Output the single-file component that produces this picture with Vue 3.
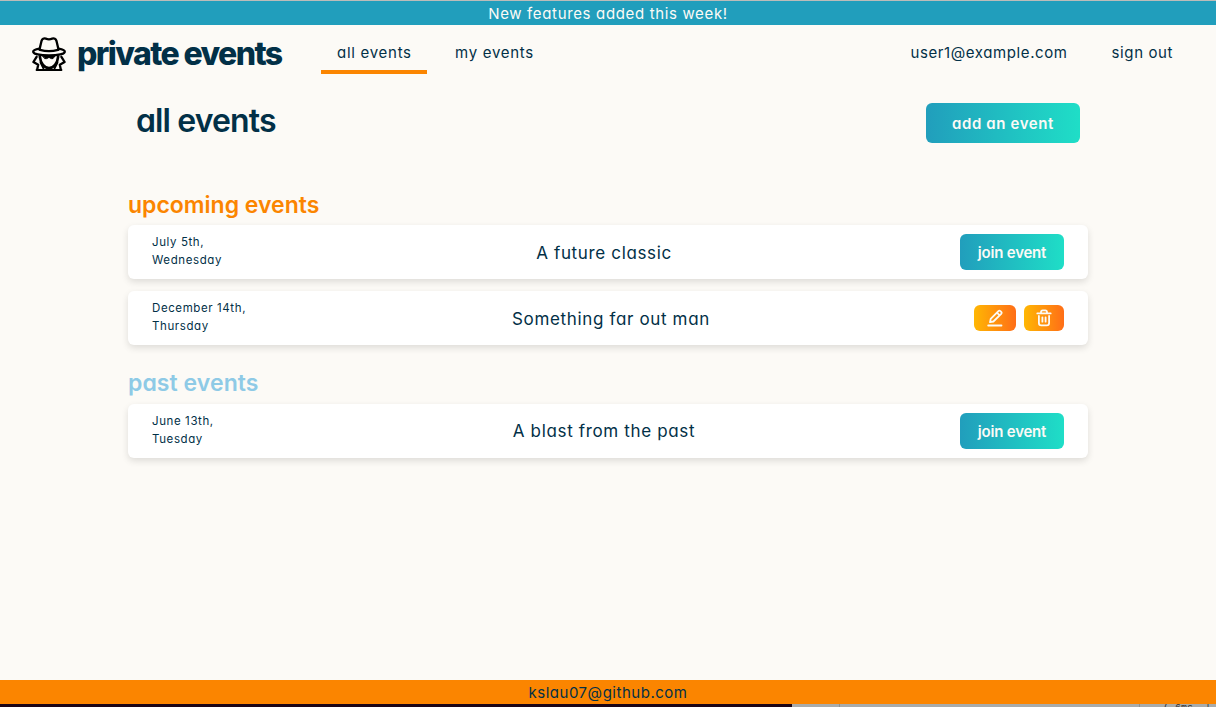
<script setup>
const sections = [
  {
    name: 'upcoming events',
    kind: 'upcoming',
    events: [
      { date: 'July 5th,', day: 'Wednesday', title: 'A future classic', own: false },
      { date: 'December 14th,', day: 'Thursday', title: 'Something far out man', own: true },
    ],
  },
  {
    name: 'past events',
    kind: 'past',
    events: [{ date: 'June 13th,', day: 'Tuesday', title: 'A blast from the past', own: false }],
  },
]
</script>

<template>
  <div class="page">
    <div class="notice">New features added this week!</div>
    <header class="header">
      <div class="brand">
        <svg class="spy" viewBox="0 0 34 34" fill="none" stroke="#000" stroke-width="2.3" stroke-linecap="round" stroke-linejoin="round">
          <path d="M7.5 12.6 9.5 4Q10.7.6 13.8 1.7 17 2.9 20.2 1.7 23.3.6 24.5 4L26.5 12.6" />
          <path d="M7.3 11.7C3.5 12.4 1.2 13.4 1.2 14.7 1.2 17 8 18.3 17 18.3S32.8 17 32.8 14.7C32.8 13.4 30.5 12.4 26.7 11.7" />
          <path d="M8 12.9Q17 15.4 26 12.9" />
          <path d="M4.6 19.8 1.4 25 6.2 27.8 5.2 32.4M29.4 19.8 32.6 25 27.8 27.8 28.8 32.4" />
          <path d="M4.5 33H29.5" stroke-width="1.8" />
          <path d="M7.8 19.5C8.6 26.5 12.3 31 17 31S25.4 26.5 26.2 19.5" stroke-width="2.6" />
          <path d="M8.5 25.5 11.5 31.5M25.5 25.5 22.5 31.5" stroke-width="1.8" />
          <path d="M11 19H23L21 21.6H19.3L17 20.4 14.7 21.6H13Z" fill="#000" stroke-width="1" />
        </svg>
        <span class="wordmark">private events</span>
      </div>
      <nav class="nav">
        <a class="link active">all events</a>
        <a class="link mine">my events</a>
      </nav>
      <div class="account">
        <a class="user">user1@example.com</a>
        <a class="signout">sign out</a>
      </div>
    </header>
    <main class="main">
      <div class="heading">
        <h1>all events</h1>
        <button class="teal add">add an event</button>
      </div>
      <section v-for="s in sections" :key="s.kind" :class="['group', s.kind]">
        <h2>{{ s.name }}</h2>
        <article v-for="e in s.events" :key="e.title" class="card">
          <div class="date">{{ e.date }}<br />{{ e.day }}</div>
          <div class="title">{{ e.title }}</div>
          <div class="actions">
            <template v-if="e.own">
              <button class="amber edit" aria-label="edit">
                <svg width="18" height="18" viewBox="0 0 18 18" fill="none" stroke="#fcfaf6" stroke-width="1.8" stroke-linecap="round" stroke-linejoin="round">
                  <path d="M4 13.2 4.7 9.9 12.4 2.1Q13.4 1.2 14.4 2.1L15.2 2.9Q16.1 3.8 15.2 4.8L7.4 12.5ZM11 3.7 13.6 6.3M2.2 16.5H15.5" />
                </svg>
              </button>
              <button class="amber remove" aria-label="delete">
                <svg width="18" height="18" viewBox="0 0 18 18" fill="none" stroke="#fcfaf6" stroke-width="1.8" stroke-linecap="round" stroke-linejoin="round">
                  <path d="M2.3 4.4H15.7M6 4.2V3.2Q6 1.4 7.8 1.4H10.2Q12 1.4 12 3.2V4.2M3.9 7V14Q3.9 16.4 6.3 16.4H11.7Q14.1 16.4 14.1 14V7M7.4 8.3V12.7M10.6 8.3V12.7" />
                </svg>
              </button>
            </template>
            <button v-else class="teal join">join event</button>
          </div>
        </article>
      </section>
    </main>
    <footer class="footer">kslau07@github.com</footer>
    <div class="dock"><span class="term"></span><span class="panel"></span><span class="pane"></span><span class="status">( 6ms &nbsp;|</span></div>
  </div>
</template>

<style>
body { margin: 0; overflow: hidden; }
</style>

<style scoped>
* { box-sizing: border-box; }
.page {
  height: 707px;
  display: flex;
  flex-direction: column;
  overflow: hidden;
  background: #fcfaf6;
  border-top: 1px solid #bdbcb9;
  color: #023047;
  font: 400 15px/24px Inter, "Noto Sans", sans-serif;
  font-feature-settings: "cv11" 1;
}
.notice {
  height: 24px;
  flex: none;
  background: #219ebc;
  color: #fcfaf6;
  text-align: center;
  line-height: 26px;
  letter-spacing: 0.65px;
}
.header { height: 56px; flex: none; display: flex; align-items: center; padding: 0 43px 0 32px; }
.brand { width: 289px; display: flex; align-items: center; }
.spy { width: 34px; height: 34px; margin: 2px 11px 0 0; }
.wordmark { padding-top: 2px; font-weight: 800; font-size: 32px; line-height: 40px; letter-spacing: -1.6px; white-space: nowrap; font-feature-settings: normal; }
.nav { display: flex; align-self: stretch; align-items: flex-start; gap: 12px; }
.link { height: 49px; padding: 16px 16px 0; width: 106px; border-bottom: 4px solid transparent; white-space: nowrap; letter-spacing: 0.72px; }
.link.active { border-color: #fb8500; }
.account { margin-left: auto; display: flex; gap: 44px; letter-spacing: 0.6px; }
.main { width: 960px; margin: 0 auto; flex: 1; }
.heading { height: 86px; padding: 22px 8px 0; display: flex; justify-content: space-between; align-items: flex-start; }
h1 { margin: -2px 0 0; font-size: 32px; line-height: 40px; font-weight: 600; letter-spacing: -0.88px; }
button { border: 0; padding: 0; border-radius: 6px; color: #fcfaf6; font: inherit; font-weight: 600; font-feature-settings: inherit; }
.teal { padding-top: 2px; background: linear-gradient(to right, #219ebc, #1fdec7); }
.add { width: 154px; height: 40px; letter-spacing: 0.6px; }
.join { width: 104px; height: 36px; padding-top: 1px; letter-spacing: -0.2px; }
.group { padding-top: 24px; }
.group + .group { padding-top: 12px; }
h2 { margin: 0 0 6px; font-size: 23px; line-height: 28px; font-weight: 600; letter-spacing: 0; }
.upcoming h2 { color: #fb8500; }
.past h2 { margin-bottom: 7px; color: #8ecae6; letter-spacing: 0.07px; }
.card {
  height: 54px;
  margin-bottom: 12px;
  padding: 0 24px;
  display: grid;
  grid-template-columns: 96px 1fr auto;
  align-items: center;
  background: #fff;
  border-radius: 6px;
  box-shadow: 0 3px 7px rgb(0 0 0 / 0.12);
}
.date { font-size: 11.5px; line-height: 18px; letter-spacing: 0.6px; margin-top: -3px; white-space: nowrap; }
.title { text-align: center; font-size: 17px; letter-spacing: 0.65px; padding-top: 2px; }
.past .title { padding-top: 0; }
.actions { display: flex; justify-content: flex-end; gap: 8px; }
.amber { height: 26px; display: flex; align-items: center; justify-content: center; background: linear-gradient(to right, #ffb703, #ff6e17); }
.edit { width: 42px; }
.remove { width: 40px; }
.footer { height: 24px; flex: none; background: #fb8500; text-align: center; line-height: 26px; letter-spacing: 0.52px; }
.dock { height: 3px; flex: none; display: flex; overflow: hidden; background: #a9abaa; }
.term { width: 792px; background: #1b0517; }
.panel { width: 48px; border-right: 1px solid #8f9190; }
.pane { width: 300px; border-right: 1px solid #8f9190; }
.status { margin-left: 23px; font: 10px/10px "Liberation Mono", monospace; color: #333; white-space: nowrap; }
</style>
